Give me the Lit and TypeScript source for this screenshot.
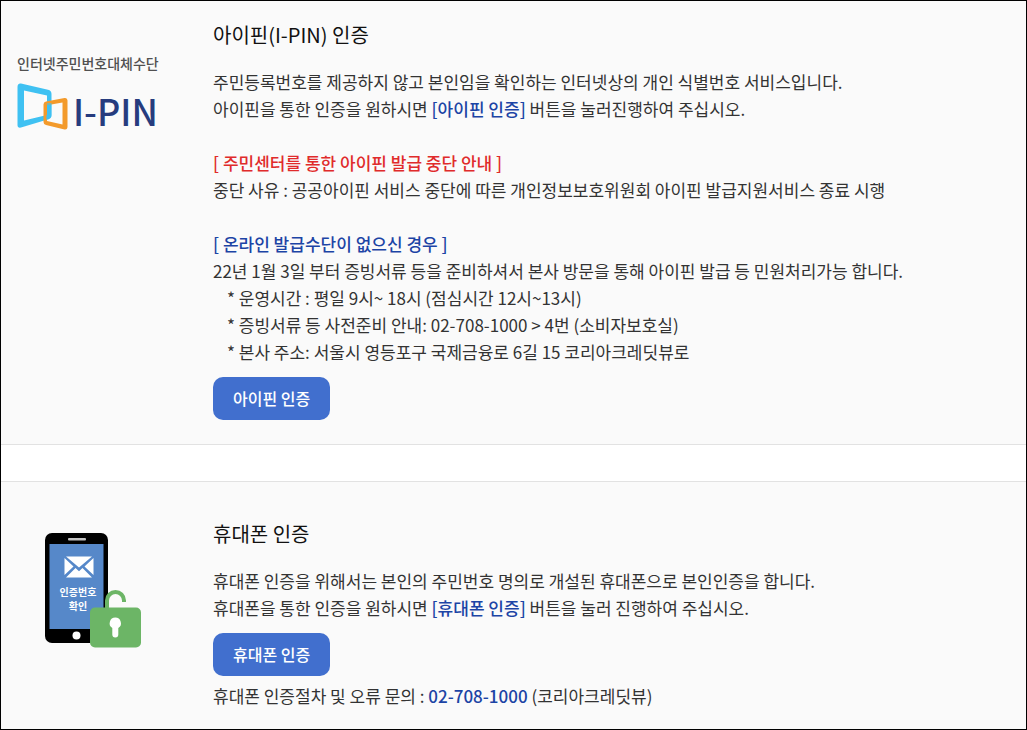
import { LitElement, html, css } from "lit";
import { customElement } from "lit/decorators.js";

@customElement("ipin-logo")
class IpinLogo extends LitElement {
  static styles = css`
    :host { display: block; }
    .logo { display: block; overflow: visible; }
    .caption { font-size: 14px; font-weight: 500; fill: #505050; }
    .name { font-size: 36px; font-weight: 500; fill: #263c7e; }
  `;

  render() {
    return html`
      <svg class="logo" width="142" height="80" role="img" aria-label="인터넷주민번호대체수단 I-PIN">
        <text class="caption" x="0" y="16">인터넷주민번호대체수단</text>
        <path fill-rule="evenodd" fill="#3fc1f2"
          d="M4 30.500L31 36.800Q34.500 37.700 34.500 41V62Q34.500 65.300 31.500 66.200L4 74.500Q0.500 75.200 0.500 72V34Q0.500 30 4 30.500ZM7 37.500V67.500L30 62V42.500Z" />
        <path fill-rule="evenodd" fill="#f39a2b"
          d="M29 48.600L47.500 45Q50.500 44.500 50.500 47.500V73.500Q50.500 77 47.500 76.500L29 72Q26.500 71.300 26.500 69V51.500Q26.500 49 29 48.600ZM30 52.300V68L45.500 71.500V49.500Z" />
        <path d="M30 50V62L29 62.300V66.800L31.500 66.200Q34.500 65.300 34.500 62V50Z" fill="#3fc1f2" opacity="0.6" />
        <text class="name" x="56" y="73">I-PIN</text>
      </svg>
    `;
  }
}

@customElement("phone-picture")
class PhonePicture extends LitElement {
  static styles = css`
    :host { display: block; }
    .phone { display: block; }
    .label { font-size: 10px; font-weight: 700; fill: #fff; text-anchor: middle; }
  `;

  render() {
    return html`
      <svg class="phone" width="98" height="116" role="img" aria-label="휴대폰 인증번호 확인">
        <rect x="1" y="0" width="63" height="110" rx="7" fill="#000" />
        <rect x="24" y="5" width="18" height="2.500" rx="1" fill="#c4c4c4" />
        <rect x="5.500" y="11" width="54" height="85" fill="#5688c9" />
        <path d="M22 23.500H48L35 34.500ZM20.500 25L29.500 33.500L20.500 42ZM49.500 25L40.500 33.500L49.500 42ZM22 44.500L31.500 35L35 38.200L38.500 35L48 44.500Z" fill="#fff" />
        <text class="label" x="34" y="63">인증번호</text>
        <text class="label" x="34" y="77">확인</text>
        <circle cx="32.500" cy="102.500" r="4" fill="#fff" />
        <path d="M63 76V67.500A8.500 8.500 0 0 1 80 67.500V69" fill="none" stroke="#6cb566" stroke-width="4" />
        <rect x="46" y="74.500" width="51" height="40" rx="5" fill="#6cb566" />
        <path d="M71.300 84.500a5.700 5.700 0 0 1 3 10.500V101.500a3 3 0 0 1-6 0V95A5.700 5.700 0 0 1 71.300 84.500Z" fill="#fff" />
      </svg>
    `;
  }
}

@customElement("app-root")
class AppRoot extends LitElement {
  static styles = css`
    :host {
      display: block;
      font-family: "Noto Sans CJK KR", "Noto Sans", sans-serif;
      font-size: 17px;
      line-height: 27px;
      color: #333;
    }
    .page {
      box-sizing: border-box;
      min-height: 100vh;
      display: flex;
      flex-direction: column;
      gap: 36px;
      border: 1px solid #000;
      background: #fff;
    }
    .method {
      display: grid;
      grid-template-columns: 196px minmax(0, 1fr);
      padding: 20px 16px 24px;
      background: #fafafa;
      border-bottom: 1px solid #e2e2e2;
    }
    .method.last {
      flex: 1;
      padding-top: 38px;
      padding-bottom: 16px;
      border-top: 1px solid #e2e2e2;
      border-bottom: 0;
    }
    .picture { padding-top: 32px; }
    .last .picture { padding: 13px 27px 0; }
    .title {
      margin: 0 0 20px;
      font-size: 20px;
      line-height: 27px;
      font-weight: 400;
      color: #111;
    }
    .text { margin: 0; }
    .text + .text { margin-top: 27px; }
    .strong { font-weight: 500; color: #1c44a5; }
    .warn { font-weight: 500; color: #e02b2b; }
    .notes { margin: 0; padding: 0 0 0 14px; list-style: none; }
    .button {
      display: block;
      margin: 12px 0 6px;
      padding: 8px 20px;
      border: 0;
      border-radius: 10px;
      background: #416fce;
      color: #fff;
      font-family: inherit;
      font-size: 16px;
      line-height: 27px;
      font-weight: 500;
      cursor: pointer;
    }
    .ipin .button { margin-bottom: 0; }
    .phone-link { text-decoration: none; }
  `;

  render() {
    return html`
      <main class="page">
        <section class="method ipin">
          <div class="picture"><ipin-logo></ipin-logo></div>
          <div>
            <h2 class="title">아이핀(I-PIN) 인증</h2>
            <p class="text">
              주민등록번호를 제공하지 않고 본인임을 확인하는 인터넷상의 개인 식별번호 서비스입니다.<br />
              아이핀을 통한 인증을 원하시면 <span class="strong">[아이핀 인증]</span> 버튼을 눌러진행하여 주십시오.
            </p>
            <p class="text">
              <span class="warn">[ 주민센터를 통한 아이핀 발급 중단 안내 ]</span><br />
              중단 사유 : 공공아이핀 서비스 중단에 따른 개인정보보호위원회 아이핀 발급지원서비스 종료 시행
            </p>
            <p class="text">
              <span class="strong">[ 온라인 발급수단이 없으신 경우 ]</span><br />
              22년 1월 3일 부터 증빙서류 등을 준비하셔서 본사 방문을 통해 아이핀 발급 등 민원처리가능 합니다.
            </p>
            <ul class="notes">
              <li>* 운영시간 : 평일 9시~ 18시 (점심시간 12시~13시)</li>
              <li>* 증빙서류 등 사전준비 안내: 02-708-1000 &gt; 4번 (소비자보호실)</li>
              <li>* 본사 주소: 서울시 영등포구 국제금융로 6길 15 코리아크레딧뷰로</li>
            </ul>
            <button class="button" type="button">아이핀 인증</button>
          </div>
        </section>
        <section class="method last">
          <div class="picture"><phone-picture></phone-picture></div>
          <div>
            <h2 class="title">휴대폰 인증</h2>
            <p class="text">
              휴대폰 인증을 위해서는 본인의 주민번호 명의로 개설된 휴대폰으로 본인인증을 합니다.<br />
              휴대폰을 통한 인증을 원하시면 <span class="strong">[휴대폰 인증]</span> 버튼을 눌러 진행하여 주십시오.
            </p>
            <button class="button" type="button">휴대폰 인증</button>
            <p class="text">
              휴대폰 인증절차 및 오류 문의 : <a class="strong phone-link" href="tel:02-708-1000">02-708-1000</a> (코리아크레딧뷰)
            </p>
          </div>
        </section>
      </main>
    `;
  }
}
